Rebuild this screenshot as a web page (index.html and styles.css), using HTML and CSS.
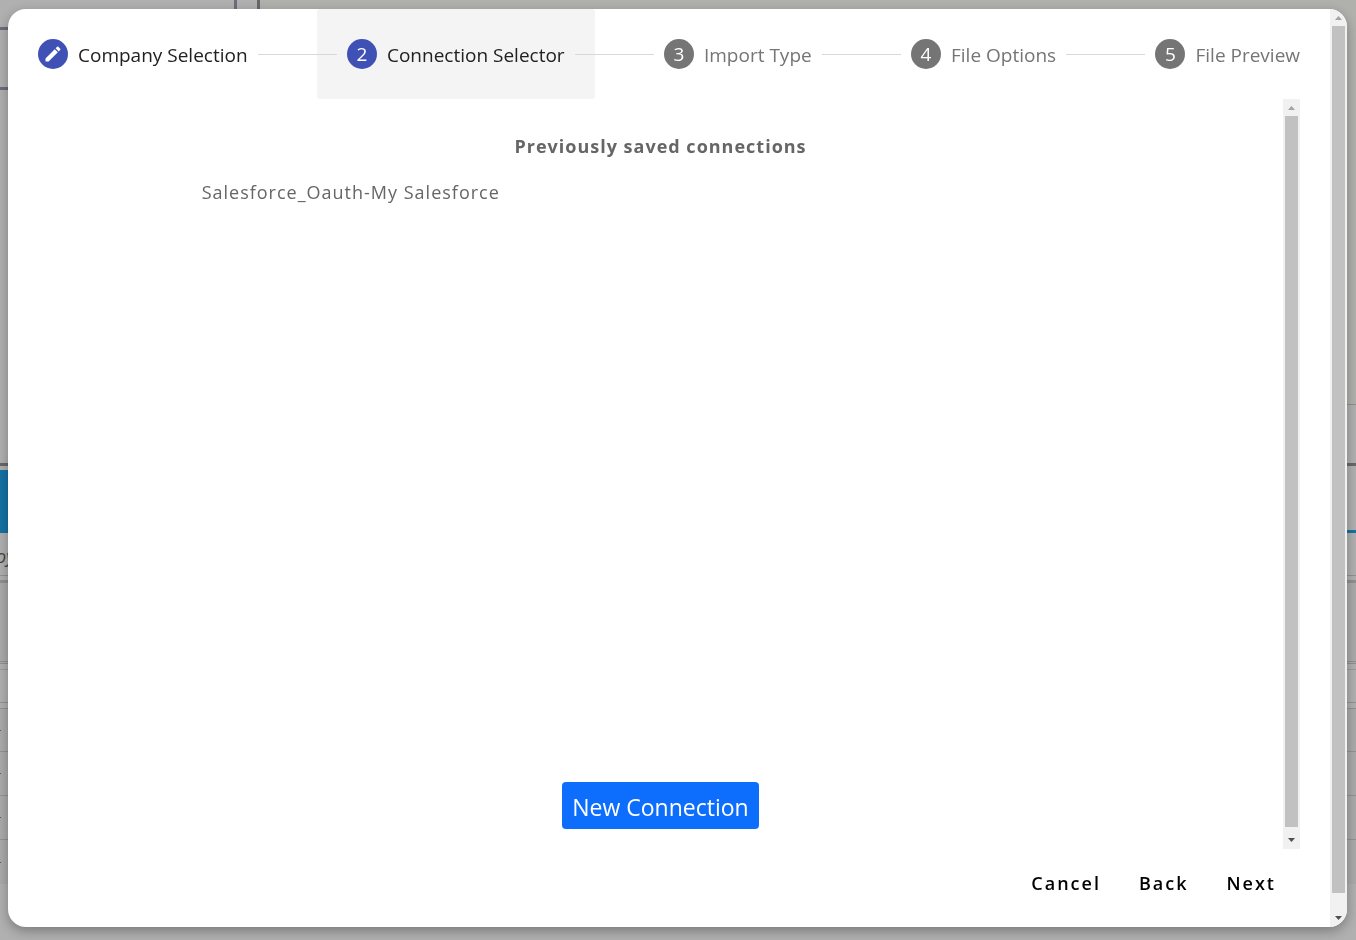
FILE: index.html
```html
<!DOCTYPE html>
<html lang="en">
<head>
    <meta charset="UTF-8">
    <meta name="viewport" content="width=device-width, initial-scale=1.0">
    <title>Import data</title>
    <link rel="stylesheet" href="styles.css">
</head>
<body>
    <!-- dimmed page behind the dialog -->
    <div class="page" aria-hidden="true">
        <div class="page-top">
            <div class="page-side">
                <div class="side-head"></div>
                <div class="side-tools"></div>
            </div>
            <div class="page-main">
                <div class="main-view"></div>
            </div>
        </div>
        <div class="tab-bar"><div class="tab"></div></div>
        <div class="copy-row">oy</div>
        <div class="filter-row"></div>
        <div class="thin-row"></div>
        <div class="head-row"></div>
        <div class="gap-row"></div>
        <div class="data-rows">
            <div class="data-row"><i class="mark"></i></div>
            <div class="data-row"><i class="mark"></i></div>
            <div class="data-row"><i class="mark"></i></div>
            <div class="data-row"><i class="mark"></i></div>
        </div>
    </div>

    <div class="overlay">
        <div class="dialog" role="dialog" aria-label="Import data">
            <div class="content">
                <div class="stepper">
                    <button class="step done">
                        <span class="step-icon">
                            <svg width="20" height="20" viewBox="0 0 24 24" fill="#fff"><path d="M3 17.25V21h3.75L17.81 9.94l-3.75-3.75L3 17.25zM20.71 7.04c.39-.39.39-1.02 0-1.41l-2.34-2.34c-.39-.39-1.02-.39-1.41 0l-1.83 1.83 3.75 3.75 1.83-1.83z"/></svg>
                        </span>
                        <span class="step-label">Company Selection</span>
                    </button>
                    <div class="step-line"></div>
                    <button class="step active" aria-current="step">
                        <span class="step-icon">2</span>
                        <span class="step-label">Connection Selector</span>
                    </button>
                    <div class="step-line"></div>
                    <button class="step">
                        <span class="step-icon">3</span>
                        <span class="step-label">Import Type</span>
                    </button>
                    <div class="step-line"></div>
                    <button class="step">
                        <span class="step-icon">4</span>
                        <span class="step-label">File Options</span>
                    </button>
                    <div class="step-line"></div>
                    <button class="step">
                        <span class="step-icon">5</span>
                        <span class="step-label">File Preview</span>
                    </button>
                </div>

                <div class="panel">
                    <div class="connections">
                        <h2>Previously saved connections</h2>
                        <p class="saved">Salesforce_Oauth-My Salesforce</p>
                        <button class="new-connection">New Connection</button>
                    </div>
                    <div class="scrollbar">
                        <svg class="arrow up" viewBox="0 0 17 17"><path d="M5 11l3.5-4 3.5 4z"/></svg>
                        <div class="thumb"></div>
                        <svg class="arrow down" viewBox="0 0 17 17"><path d="M5 6h7l-3.5 4z"/></svg>
                    </div>
                </div>

                <div class="actions">
                    <button>Cancel</button>
                    <button>Back</button>
                    <button>Next</button>
                </div>
            </div>
            <div class="scrollbar outer">
                <svg class="arrow up" viewBox="0 0 17 17"><path d="M5 11l3.5-4 3.5 4z"/></svg>
                <div class="thumb"></div>
                <svg class="arrow down" viewBox="0 0 17 17"><path d="M5 6h7l-3.5 4z"/></svg>
            </div>
        </div>
    </div>
</body>
</html>
```

FILE: styles.css
```css
* {
    box-sizing: border-box;
    margin: 0;
    padding: 0;
}

body {
    font-family: "Segoe UI", "Open Sans", "Noto Sans", sans-serif;
    background-color: #b0b0b0;
    height: 100vh;
    overflow: hidden;
}

button {
    font-family: inherit;
    border: none;
    background: none;
    cursor: pointer;
}

/* page behind */
.page-top {
    display: flex;
    gap: 20px;
    height: 466px;
    border-bottom: 3px solid #686868;
}

.page-side {
    width: 237px;
    border-right: 3px solid #6d6c78;
}

.side-head {
    height: 30px;
    border-bottom: 3px solid #6d6c78;
}

.side-tools {
    height: 60px;
    border-bottom: 3px solid #6d6c78;
}

.page-main {
    flex: 1;
    border-left: 3px solid #686868;
}

.main-view {
    height: 405px;
    border-bottom: 1px solid #909090;
    background-color: #b0b0ad;
}

.tab-bar {
    height: 67px;
    padding-top: 4px;
    border-bottom: 3px solid #1672a5;
}

.tab {
    width: 200px;
    height: 60px;
    background-color: #1672a5;
}

.copy-row {
    height: 43px;
    line-height: 46px;
    font-size: 18px;
    font-style: italic;
    color: #444;
    text-indent: -4px;
    border-bottom: 1px solid #929292;
}

.filter-row {
    height: 84px;
    margin-top: 4px;
    border-top: 3px solid #909090;
    border-bottom: 3px double #909090;
    background-color: #aaa;
}

.thin-row {
    height: 6px;
    border-bottom: 1px solid #9c9c9c;
}

.head-row {
    height: 33px;
    border-bottom: 1px solid #929292;
}

.gap-row {
    height: 6px;
    border-bottom: 1px solid #929292;
}

.data-row {
    display: flex;
    align-items: center;
    height: 44px;
    background-color: #aaa;
    border-bottom: 1px solid #929292;
}

.data-row:first-child {
    height: 43px;
}

.data-row:last-child {
    border-bottom: none;
}

.mark {
    width: 1px;
    height: 1px;
    background-color: #1672a5;
}

/* dialog */
.overlay {
    position: fixed;
    inset: 0;
    display: flex;
    padding: 9px 9px 13px 8px;
}

.dialog {
    flex: 1;
    display: flex;
    background-color: #fff;
    border-radius: 18px;
    overflow: hidden;
    box-shadow: 0 4px 12px rgba(0, 0, 0, 0.3);
}

.content {
    flex: 1;
    display: flex;
    flex-direction: column;
}

/* stepper */
.stepper {
    display: flex;
    align-items: center;
}

.step {
    display: flex;
    align-items: center;
    gap: 10px;
    height: 90px;
    padding: 0 30px;
    font-size: 19px;
    color: #757575;
    white-space: nowrap;
    border-radius: 3px;
}

.step.done,
.step.active {
    color: #212121;
}

.step.active {
    background-color: #f4f4f4;
}

.step-label {
    padding-top: 2px;
}

.step-icon {
    display: flex;
    align-items: center;
    justify-content: center;
    width: 30px;
    height: 30px;
    border-radius: 50%;
    background-color: #757575;
    color: #fff;
}

.done .step-icon,
.active .step-icon {
    background-color: #3f51b5;
}

.step-line {
    flex: 1;
    height: 1px;
    margin: 0 -20px;
    background-color: #d9d9d9;
    z-index: 1;
}

/* saved connections */
.panel {
    flex: 1;
    display: flex;
    margin: 0 30px;
}

.connections {
    flex: 1;
    display: flex;
    flex-direction: column;
    align-items: center;
    padding: 32px 0 20px;
    color: #666;
}

.connections h2 {
    font-size: 18px;
    line-height: 30px;
    font-weight: 700;
    letter-spacing: 1px;
}

.saved {
    width: 75%;
    margin-top: 16px;
    padding: 0 8px;
    font-size: 18px;
    line-height: 30px;
    letter-spacing: 1px;
}

.new-connection {
    margin-top: auto;
    padding: 3px 10px 0;
    font-size: 23px;
    line-height: 44px;
    color: #fff;
    background-color: #0d6efd;
    border-radius: 4px;
}

.actions {
    display: flex;
    justify-content: flex-end;
    gap: 38px;
    height: 78px;
    padding: 18px 54px 0 0;
}

.actions button {
    height: 32px;
    font-size: 18px;
    font-weight: 600;
    letter-spacing: 2px;
    color: #000;
}

/* scrollbars */
.scrollbar {
    width: 17px;
    display: flex;
    flex-direction: column;
    background-color: #f1f1f1;
}

.arrow {
    width: 17px;
    height: 17px;
    fill: #505050;
}

.arrow.up {
    fill: #a3a3a3;
}

.thumb {
    flex: 1;
    margin: 0 2px;
    background-color: #c1c1c1;
}

.scrollbar .arrow.down {
    margin-top: 5px;
}

.outer .arrow.down {
    margin-top: 17px;
}
```
